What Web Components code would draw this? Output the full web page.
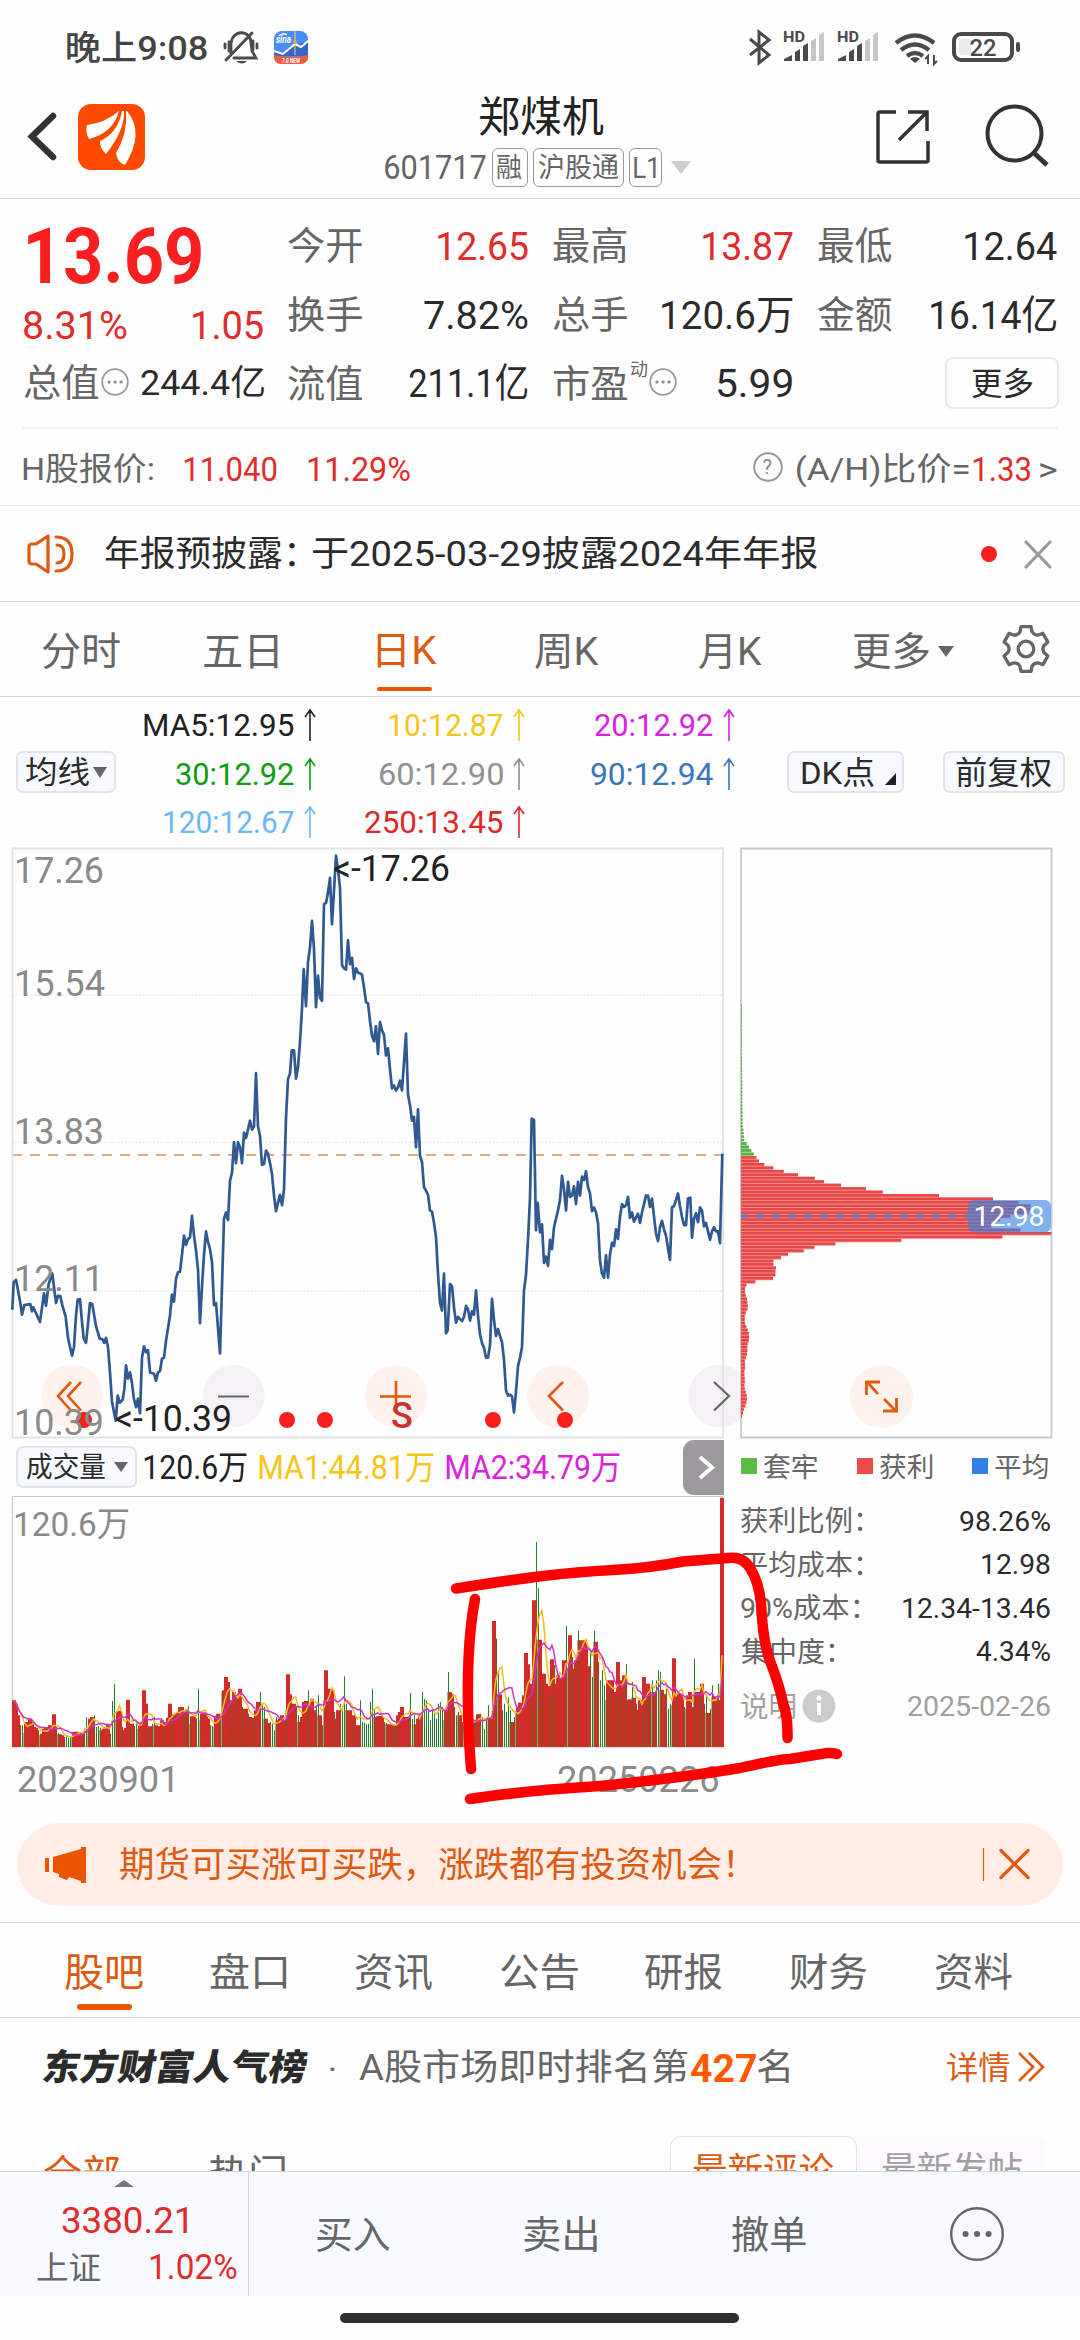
<!DOCTYPE html>
<html lang="zh-CN">
<head>
<meta charset="utf-8">
<title>郑煤机 601717</title>
<style>
html,body{margin:0;padding:0;background:#fefefe}
body{width:1080px;height:2340px;overflow:hidden;font-family:Roboto,"Noto Sans CJK SC",sans-serif;color:#2b2b2b}
</style>
</head>
<body>
<stock-app></stock-app>
<script>
const FONT = 'Roboto, "Noto Sans CJK SC", sans-serif';
const ctx = document.createElement('canvas').getContext('2d');

/* Registers an element whose shadow root holds the given markup. */
function component(name, css, html) {
  const tpl = document.createElement('template');
  tpl.innerHTML = `<style>*{box-sizing:border-box}:host{display:block;flex:none}svg{display:block;flex:none;overflow:visible}${css}</style>${typeof html === 'function' ? html() : html}`;
  customElements.define(name, class extends HTMLElement {
    constructor() {
      super();
      this.attachShadow({mode: 'open'}).appendChild(tpl.content.cloneNode(true));
    }
  });
}

/* Single-line label whose visible glyphs span exactly w pixels; g is the gap before it. */
customElements.define('fit-text', class extends HTMLElement {
  constructor() {
    super();
    this.attachShadow({mode: 'open'}).innerHTML =
      '<style>:host{display:block;flex:none;white-space:nowrap}span{display:inline-block;transform-origin:0 50%}</style><span><slot></slot></span>';
  }
  connectedCallback() {
    const a = n => this.getAttribute(n);
    const size = a('s') || 34, weight = a('b') || 400;
    ctx.font = `${weight} ${size}px ${FONT}`;
    const m = ctx.measureText(this.textContent);
    const w = +a('w'), k = w / (m.actualBoundingBoxLeft + m.actualBoundingBoxRight);
    Object.assign(this.style, {width: w + 'px', height: size * 1.2 + 'px', lineHeight: size * 1.2 + 'px',
      fontSize: size + 'px', fontWeight: weight, marginLeft: (a('g') || 0) + 'px'});
    if (a('c')) this.style.color = a('c');
    this.shadowRoot.querySelector('span').style.transform =
      `translate(${m.actualBoundingBoxLeft * k}px, 1px) scaleX(${k})`;
  }
});

const T = (text, g, w, s, c, b) => `<fit-text g="${g}" w="${w}" s="${s}"${c ? ` c="${c}"` : ''}${b ? ` b="${b}"` : ''}>${text}</fit-text>`;
const RED = '#e22b2b', GREY = '#666', INK = '#2b2b2b', ORANGE = '#dd5a10';

component('status-bar', ':host{display:flex;height:79px;padding:15px 0 0 67px;align-items:flex-start}fit-text{margin-top:12px}', () => {
  const sig = x => `<text x="${x}" y="42" font-size="15" font-weight="700" textLength="22" lengthAdjust="spacingAndGlyphs">HD</text>
   <path d="M${x+1} 61v-2l8-4v6zM${x+12} 61V52l5-3v12zM${x+20} 61V46l5-3v18z"/><path fill="#c6c6c6" d="M${x+28} 61V41l5-3v23zM${x+36} 61V35l5-3v29z"/>`;
  return T('晚上9:08', 0, 140, 34, '#444', 500) +
  `<svg width="806" height="64" viewBox="207 15 806 64" fill="#4a4a4a" font-family="Roboto">
   <g fill="none" stroke="#4a4a4a" stroke-width="2.8" stroke-linecap="round"><path d="M231 55V45C231 29 251 29 251 43l1 8 4 7H234M226 60 252 33M225 44v4M257 44v4M229 42v9M253 41v9"/></g><path d="M236 61h11q-5 5-11 0"/>
   <g><rect x="274" y="31" width="34" height="33" rx="8" fill="#4a8df8"/><path d="M274 51l8 4 14-10 12-4v15h-34z" fill="#3568c4"/><path d="M274 51l9 3 12-10 6 3 7-6" fill="none" stroke="#fff" stroke-width="2"/><path d="M295 31v24" stroke="#f2d27a"/><circle cx="295" cy="42" r="2" fill="#f29b37"/><path d="M274 55q17 4 34 0v2q0 7-8 7h-18q-8 0-8-7z" fill="#ef5a40"/><text x="282" y="62.500" font-size="7" font-weight="700" fill="#fff" textLength="18" lengthAdjust="spacingAndGlyphs">7.0 NEW</text><text x="276" y="43" font-size="10" font-weight="700" font-style="italic" fill="#fff" textLength="15" lengthAdjust="spacingAndGlyphs">sina</text><path d="M279 36q4-4 8-1" fill="none" stroke="#fff" stroke-width="1.500"/></g>
   <path d="M750 39l19 16-10 8V32l10 8-19 15" fill="none" stroke="#4a4a4a" stroke-width="3"/>
   ${sig(783)}${sig(837)}
   <g fill="none" stroke="#4a4a4a" stroke-width="4.500"><path d="M896 43q19-15 38 0M901 50q14-11 28 0M907 56q8-6 16 0"/></g><path d="M910 59q5-4 10 0l-5 4z"/><path d="M928 64v-8l-3 3M934 55v9l3-3" fill="none" stroke="#4a4a4a" stroke-width="2"/>
   <rect x="954" y="34" width="58" height="26" rx="7" fill="none" stroke="#4a4a4a" stroke-width="4"/><rect x="959" y="39" width="12" height="16" rx="3" fill="#ece8ec"/><rect x="1016" y="42" width="4" height="10" rx="2"/>
   <text x="969.500" y="56" font-size="24" font-weight="500" textLength="27" lengthAdjust="spacingAndGlyphs">22</text></svg>`;
});

component('app-header', `:host{display:flex;height:120px;border-bottom:1px solid #d5d5e0}
 .mid{flex:none;width:308px;margin-left:240px;padding-top:13px}.sub{display:flex;align-items:center;height:40px;margin-top:5px}
 .tag{border:1.500px solid #999;border-radius:6px;height:39px;display:flex;align-items:center;flex:none}
 .tri{flex:none;border:10px solid transparent;border-top:13px solid #ccc;border-bottom:0;margin:0 0 0 9px}`,
 `<svg width="145" height="118" viewBox="0 79 145 118"><path d="M53 116 32 136.500 53 157" fill="none" stroke="#333" stroke-width="6.500" stroke-linecap="round"/>
  <rect x="78" y="104" width="67" height="66" rx="13" fill="#ff4a00"/>
  <g fill="#fff"><path d="M87 125q18-2 32-14-6 22-30 28-4-7-2-14z"/><path d="M100 141q18-8 22-30l2 0q1 19-18 43-6-5-6-13z"/><path d="M116 153q12-20 10-42l1 0q18 22-2 54-8-3-9-12z"/></g></svg>
  <div class="mid">${T('郑煤机', 93.500, 125, 42, '#222')}<div class="sub">${T('601717', 0, 101, 33.500, GREY)}
  <div class="tag" style="margin-left:6px;width:36px">${T('融',4,25,27,GREY)}</div><div class="tag" style="margin-left:5px;width:91px">${T('沪股通',5,80,27,GREY)}</div><div class="tag" style="margin-left:5px;width:33px">${T('L1',4,22,29,GREY)}</div><i class="tri"></i></div></div>
  <svg width="387" height="118" viewBox="693 79 387 118" fill="none" stroke="#333"><path stroke-width="3.500" d="M896 112h-16q-2 0-2 2v46q0 2 2 2h46q2 0 2-2v-19M908 112h19v19M927 112l-28 28"/><circle cx="1014.500" cy="133.500" r="27" stroke-width="4"/><path stroke-width="5" d="M1034 153l13 12"/></svg>`);

const dots = '<svg width="28" height="28" viewBox="0 0 28 28"><circle cx="14" cy="13" r="12.800" fill="none" stroke="#999" stroke-width="1.800"/><path d="M8 13h.1M14 13h.1M20 13h.1" stroke="#888" stroke-width="3.200" stroke-linecap="round"/></svg>';
const cell = (l, v, w, c, s = 39.500) => `<div class="cell">${T(l, 0, 74, 37.500, GREY)}${T(v, 0, w, s, c)}</div>`;
component('quote-panel', `:host{display:flex;height:230px;margin:0 22px;border-bottom:2px solid #f2f2f5}
 .l{width:242px;padding:10px 0 0 2px}.row{display:flex;align-items:center;height:69px}
 .grid{display:grid;grid-template-columns:240px 240px 239px;column-gap:25px;grid-template-rows:69px 69px 68px;margin-left:24px;padding-top:12px}
 .cell{display:flex;align-items:center;justify-content:space-between}.pe{justify-content:flex-start}.sup{align-self:flex-start;margin-top:9px}
 .btn{justify-self:end;align-self:center;width:114px;height:52px;border:2px solid #eae8ef;border-radius:8px;display:flex;align-items:center;margin-right:-2px}`,
 `<div class="l"><div class="row" style="height:94px">${T('13.69', 4, 173, 78, '#fa2020', 700)}</div>
  <div class="row" style="height:44px">${T('8.31%',0,103,39.500,RED)}${T('1.05',66,70,39.500,RED)}</div>
  <div class="row" style="height:71px">${T('总值',0,74,37.500,GREY)}<span style="margin-left:3px">${dots}</span>${T('244.4亿',12,123,35,INK)}</div></div>
 <div class="grid">${cell('今开','12.65',90,RED)}${cell('最高','13.87',90,RED)}${cell('最低','12.64',92,INK)}
 ${cell('换手','7.82%',104,INK)}${cell('总手','120.6万',131,INK)}${cell('金额','16.14亿',126,INK)}
 ${cell('流值','211.1亿',119,INK)}<div class="cell pe">${T('市盈',0,74,37.500,GREY)}<span class="sup">${T('动',3,17,18,GREY)}</span><span style="margin-left:2px">${dots}</span>${T('5.99',40,75,39.500,INK)}</div>
 <div class="btn">${T('更多',25,61,32,INK)}</div></div>`);

component('h-share', ':host{display:flex;height:77px;align-items:center;padding:2px 0 0 23px;border-bottom:1px solid #ececf0}',
 T('H股报价:',0,130,32,GREY)+T('11.040',31,93,34,RED)+T('11.29%',31,102,34,RED)+
 `<svg width="30" height="30" style="margin-left:343px" viewBox="0 0 30 30"><circle cx="15" cy="14" r="13.800" fill="none" stroke="#999" stroke-width="2"/><text x="9.500" y="21" font-family="Roboto" font-size="20" fill="#888">?</text></svg>`+
 T('(A/H)比价=',14,172,32,GREY)+T('1.33',4,57,34,RED)+T('&gt;',10,17,34,GREY));

component('notice-bar', ':host{display:flex;height:96px;align-items:center;border-bottom:1px solid #d5d5e0;padding-left:27px}',
 `<svg width="48" height="42" viewBox="27 532 48 42" fill="none" stroke="#dd5a10" stroke-width="3.200" stroke-linecap="round" stroke-linejoin="round"><path d="M48 535v36l-12-8h-4q-3 0-3-3v-14q0-3 3-3h4zM56 536q16 0 16 17t-16 17M57 544q7 0 7 9t-7 9"/></svg>`+
 T('年报预披露：',30,190,35.5,INK)+T('于2025-03-29披露2024年年报',17,506,35.5,INK)+
 `<svg width="100" height="40" viewBox="965 533 100 40" style="margin-left:147px"><circle cx="989" cy="553" r="8" fill="#fa2020"/><path d="M1026 541l24 25M1050 541l-24 25" stroke="#999" stroke-width="3.200" stroke-linecap="round"/></svg>`);

component('period-tabs', ':host{display:flex;height:95px;align-items:center;border-bottom:1px solid #d5d5e0;padding-top:4px}.on{display:flex;flex-direction:column;height:80px;padding-top:16px}.on i{height:6px;width:55px;border-radius:3px;background:#eb5500;margin-top:13px}.tri{border:8px solid transparent;border-top:11px solid #666;border-bottom:0;margin-left:9px}',
 T('分时',42,78,39,GREY)+T('五日',84,74,39,GREY)+`<div class="on" style="margin-left:99px">${T('日K',0,60,39,ORANGE)}<i></i></div>`+
 T('周K',98,64,39,GREY)+T('月K',100,63,39,GREY)+T('更多',91,76,39,GREY)+'<i class="tri"></i>'+
 (() => {let d='';for(let k=0;k<6;k++){const p=(r,a)=>`${(26+r*Math.sin(a)).toFixed(1)} ${(26-r*Math.cos(a)).toFixed(1)}`,b=k*Math.PI/3;d+=`${k?'L':'M'}${p(23,b-.22)}L${p(23,b+.22)}L${p(18.2,b+.34)}Q${p(16,b+.52)} ${p(18.2,b+.71)}`;}
 return `<svg width="52" height="52" viewBox="0 0 52 52" style="margin:-4px 0 0 46px" fill="none" stroke="#666" stroke-width="3.300"><path d="${d}Z" stroke-linejoin="round"/><circle cx="26" cy="26" r="7.800"/></svg>`})());

const arrow = '<svg width="12" height="32" viewBox="0 0 12 32" style="margin-left:10px" fill="none" stroke="currentColor" stroke-width="1.600"><path d="M6 32V1M1 8 6 1l5 7"/></svg>';
const ma = (t, w, c) => `<div class="m" style="color:${c}">${T(t,0,w,31)}${arrow}</div>`;
component('ma-legend', `:host{display:flex;height:151px}
 .g{display:grid;grid-template-columns:200px 209px 210px;grid-template-rows:48px 49px 48px;padding-top:4px}.m{display:flex;align-items:center;justify-content:flex-end}
 .b{display:flex;align-items:center;height:42px;margin-top:54px;border:2px solid #e2e3ec;border-radius:7px;background:#f6faff;flex:none}.tri{border:7px solid transparent;border-top:11px solid #666;border-bottom:0;margin-left:4px}`,
 `<div class="b" style="width:100px;margin-left:16px">${T('均线',8,63,31,INK)}<i class="tri"></i></div>
 <div class="g">${ma('MA5:12.95',150,'#222')}${ma('10:12.87',114,'#f5c518')}${ma('20:12.92',118,'#dc23dc')}
 ${ma('30:12.92',118,'#109c10')}${ma('60:12.90',123,'#919191')}${ma('90:12.94',122,'#3a76ba')}${ma('120:12.67',130,'#6cb8f5')}${ma('250:13.45',138,'#e02828')}</div>
 <div class="b" style="width:117px;margin-left:52px">${T('DK点',13,72,32,INK)}<svg width="11" height="12" style="margin:14px 0 0 11px"><path d="M11 0V12H0z" fill="#222"/></svg></div>
 <div class="b" style="width:122px;margin-left:39px">${T('前复权',11,95,32,INK)}</div>`);

/* Closing prices: x in thirds of a pixel, y on the plotting grid of 2.376 units per pixel. */
const closeA = '37,1116 41,1050 48,1045 54,1070 60,1095 66,1128 73,1105 91,1103 96,1120 100,1110 120,1145 132,1077 138,1107 146,1055 157,1030 168,1100 174,1083 181,1084 187,1105 197,1133 204,1183 216,1225 222,1205 228,1130 233,1092 240,1091 246,1145 251,1185 258,1195 264,1150 270,1100 277,1103 288,1155 299,1185 307,1186 313,1195 318,1183 324,1205 330,1265 336,1335 347,1380 353,1320 359,1337 368,1330 373,1305 378,1248 384,1280 390,1265 396,1290 401,1325 408,1348 414,1327 420,1362 426,1230 432,1203 438,1217 444,1212 450,1265 462,1268 468,1285 474,1265 480,1262 486,1232 492,1230 498,1190 504,1160 510,1130 516,1080 522,1097 528,1042 534,1027 540,1026 546,985 552,940 558,962 564,948 570,945 576,893 582,940 588,975 594,1020 600,1148 606,1060 612,985 618,930 624,955 630,972 636,1003 642,1105 648,1100 654,1160 660,1220 666,1060 672,900 678,885 684,903 690,810 696,790 702,718 708,768 714,718 720,730 726,768 732,695 738,708 744,688 750,667 756,688 762,680 768,554 774,680 780,703 786,772 792,770 798,738 804,745 810,768 816,793 822,845 828,882 834,862 840,843 846,868 852,830 858,660 864,568 870,555 875,500 882,500 888,567 894,540 900,480 906,400 911,307 918,395 924,290 930,255 936,192 942,260 948,397 954,322 960,375 966,382 972,152 978,150 984,125 990,90 996,200 1002,120 1008,37 1014,70 1020,115 1026,297 1032,305 1038,308 1044,238 1050,295 1056,280 1062,330 1068,305 1074,315 1080,317';
const closeB = '6,320 12,350 18,385 24,388 30,430 36,465 42,478 48,442 54,508 60,433 66,452 72,463 78,512 84,495 90,545 96,590 102,583 108,595 114,588 120,572 126,595 138,460 144,605 150,630 156,667 162,658 168,730 174,640 180,750 186,765 192,825 198,833 204,843 210,880 216,883 222,910 228,943 234,1030 240,1100 246,1118 252,1030 258,1172 263,1165 270,1055 276,1060 282,1110 288,1147 294,1133 306,1143 312,1133 318,1107 324,1115 330,1142 336,1120 342,1128 348,1070 354,1130 360,1175 366,1195 372,1207 378,1230 384,1230 390,1200 396,1090 402,1140 408,1178 414,1162 420,1178 426,1193 432,1235 438,1308 444,1320 450,1318 456,1322 462,1360 468,1310 474,1250 480,1230 486,1205 492,1070 498,1033 504,950 510,850 515,662 522,665 528,927 533,862 540,932 546,913 552,1005 558,990 564,1012 570,950 576,972 582,920 588,900 594,880 600,855 606,798 612,830 618,880 624,812 630,848 636,845 642,823 648,865 654,812 660,845 666,800 672,808 678,787 684,825 690,840 696,882 702,873 708,885 714,910 720,1000 726,1030 732,1040 738,987 744,1040 750,985 756,957 762,965 768,925 774,948 780,895 786,865 792,872 798,868 804,848 810,898 816,885 822,907 828,897 834,888 840,910 846,885 852,865 858,845 864,845 870,872 876,852 882,895 888,935 894,953 900,920 906,905 912,925 918,940 924,970 930,998 936,872 942,870 948,855 954,840 960,870 966,895 972,915 978,915 984,852 991,850 996,945 1002,900 1008,887 1014,908 1020,873 1026,880 1032,918 1038,910 1044,930 1050,950 1056,930 1062,920 1068,930 1074,930 1080,958 1087,745';
const toPts = (s, off) => s.split(' ').map(p => {const [x,y]=p.split(',');return `${((+x+off)/3).toFixed(1)},${(840+y/2.376).toFixed(1)}`}).join(' ');

const label = (t, x, y, w, c='#8a8a8a', s=36) => `<text x="${x}" y="${y}" font-size="${s}" fill="${c}" textLength="${w}" lengthAdjust="spacingAndGlyphs">${t}</text>`;
component('price-chart', ':host{width:712px;height:590px}text{font-family:Roboto,"Noto Sans CJK SC",sans-serif}', () => `<svg width="712" height="590" viewBox="12 848 712 590">
 <path d="M13 995H722M13 1142.500H722M13 1291H722" stroke="#ececec" stroke-width="1.500" stroke-dasharray="2 1.500"/>
 <path d="M12 1155H723" stroke="#eda67c" stroke-width="2" stroke-dasharray="10 8"/>
 <g><circle cx="72" cy="1396" r="31" fill="#fff1ec"/><circle cx="233.500" cy="1396" r="31" fill="#f5f2f6"/><circle cx="396" cy="1396" r="31" fill="#fff1ec"/><circle cx="558" cy="1396" r="31" fill="#fff1ec"/><circle cx="719.500" cy="1396" r="31" fill="#f5f2f6"/></g>
 <path d="M12.500 848.500H723V1437.500H12.500Z" fill="none" stroke="#e2e2e2" stroke-width="1.800"/>
 <g fill="none" stroke="#e25a10" stroke-width="2.600"><path d="M71 1382 58 1396l13 14.500M81 1382l-13 14 13 14.500M380 1396.500h31M396 1381v31M563 1382l-14 14 14 14.500"/><path stroke="#666" stroke-width="2.200" d="M218 1396.500h31M714 1382l15 14-15 14.500"/></g>
 <polyline points="${toPts(closeA,0)} ${toPts(closeB,1080)}" fill="none" stroke="#2f5991" stroke-width="2.700" stroke-linejoin="round"/>
 <g fill="#f91f1f"><circle cx="84" cy="1420" r="8"/><circle cx="287" cy="1420" r="8"/><circle cx="325" cy="1420" r="8"/><circle cx="493" cy="1420" r="8"/><circle cx="565" cy="1420" r="8"/></g>
 ${label('17.26',14,883,90)}${label('15.54',14,996,91)}${label('13.83',14,1144,90)}${label('12.11',14,1291,90)}${label('10.39',14,1435,90)}
 ${label('&lt;-17.26',333,881,117,'#222')}${label('&lt;-10.39',115,1430.500,117,'#222')}
 <text x="391" y="1428" font-size="36" font-weight="500" fill="#c83232">S</text></svg>`);

const chips = [79,86,93,100,108,116,132,159,190,233,283,311,362,437,487,656,818,895,930,930,925,870,840,813,813,900,993,846,543,345,282,250,203,182,159,159,167,165,165,158,105,78,74,74,76,80,81,82,81,76,73,73,74,78,82,85,86,85,82,81,81,80,76,73,74,74,72,72,73,73,72,73,76,79,80,78,75,70,68,65];
component('chip-chart', ':host{width:312px;height:590px}text{font-family:Roboto,sans-serif}', () => {
  let bars = '';
  for (let i = 1; i < 41; i++) bars += `<rect x="741" y="${(1142.3-i*3.45).toFixed(2)}" width="${Math.max(.9,3.6-Math.min(i,6)*.3-i*.035).toFixed(1)}" height="2.500" fill="#57ae45"/>`;
  chips.forEach((v, i) => {const y=(1142.3+i*3.45).toFixed(2),w=((v-62)/3).toFixed(1),g=i<4;
    bars += `<rect x="741" y="${y}" width="${w}" height="3.450" fill="${g?'#a4dd98':'#fa8d8d'}"/><rect x="741" y="${y}" width="${w}" height="2.600" fill="${g?'#57ae45':'#e74747'}"/>`;});
  return `<svg width="312" height="590" viewBox="741 848 312 590"><path d="M741 848.500H1051.500V1437.500H741Z" fill="none" stroke="#c9c9c9" stroke-width="1.800"/>${bars}
  <path d="M741 1216H968" stroke="#4a7cd0" stroke-width="3" stroke-dasharray="8 8" stroke-dashoffset="1"/>
  <rect x="968" y="1200" width="83" height="32.500" rx="6" fill="#3282e6" fill-opacity=".62"/>${label('12.98',973.500,1226,71,'#fff',28.5)}
  <circle cx="881.500" cy="1396.500" r="31.500" fill="#fff1ec"/><path d="M878 1394l-10-11M866.500 1395v-13H880M884 1399l11 11M896.500 1398v13H883" fill="none" stroke="#e25a10" stroke-width="2.800"/></svg>`;
});

component('chip-legend', ':host{display:flex;height:56px;align-items:center}i{width:16px;height:16px;flex:none}',
 ['套牢,#5cba46,0','获利,#eb4b4b,40','平均,#3280e6,39'].map(s=>{const [t,c,g]=s.split(',');return `<i style="background:${c};margin-left:${g}px"></i>${T(t,7,53,27.5,GREY)}`}).join(''));

component('volume-head', `:host{display:flex;height:58px;align-items:center}.b{display:flex;align-items:center;width:121px;height:42px;margin-left:4px;border:2px solid #e2e3ec;border-radius:7px;background:#f6faff;flex:none}
 .tri{border:7px solid transparent;border-top:10px solid #666;border-bottom:0;margin-left:9px}.n{width:41px;height:55px;background:#9c9a9c;border-radius:11px 0 0 11px;margin-left:63px;flex:none}`,
 `<div class="b">${T('成交量',9,78,28,INK)}<i class="tri"></i></div>${T('120.6万',7,103,33.5,'#222')}${T('MA1:44.81万',12,175,33.5,'#f5c518')}${T('MA2:34.79万',12,174,33.5,'#dc23dc')}
 <div class="n"><svg width="41" height="55"><path d="M17 17l12 10.500-12 10.500" fill="none" stroke="#fff" stroke-width="4"/></svg></div>`);

/* One token per trading day: r/g for rise or fall, then the bar height in thirds of a pixel. */
const vols = ('r140 r130 r95 g65 g65 g42 r75 r60 r85 r75 r60 r58 g50 g35 r40 r55 r60 g45 r65 r55 r98 g60 g42 r38 r35 g30 g30 g28 g30 g32 r45 r46 r44 r44 r40 g55 g90 g60 r85 r90 g95 g60 g62 g58 r50 r55 r60 r68 g40 g138 g188 g80 r105 r108 g60 r50 r58 r142 g65 r70 g62 g75 g55 r65 r75 r170 r130 g55 r62 g70 g90 r65 r62 r60 r80 g55 r75 r88 r130 g95 r98 r95 r105 r120 r120 g100 r105 g122 g70 r92 r92 g85 g175 g80 r100 r103 r95 r85 g65 g62 g60 r90 r100 g100 g165 r170 r210 r195 g130 r140 r165 g150 r150 r175 g120 r115 r115 g100 r90 r88 g85 r110 r135 g165 g130 g120 r85 r72 g75 g70 g50 g90 r80 r85 r95 r80 g110 r218 r158 r125 r130 g120 g95 r75 r90 r135 r138 g170 r125 r145 r110 g120 g155 r95 g65 g140 r230 r170 r175 r172 g105 r85 r110 g130 g115 g212 g130 r110 r110 g85 r95 r65 r65 g140 g75 g72 g68 g70 g135 g175 g110 r90 r92 r93 r92 g75 g72 r68 r68 g60 r65 g65 r95 r105 ' +
 'r120 r90 r90 r88 g162 g85 g95 r68 r85 r95 g165 g145 g140 g110 g80 g120 g100 g85 g130 g135 g120 g80 r110 g225 r165 r158 g120 g95 g105 r95 g75 g60 r70 g80 r80 r70 g75 r80 r98 g100 g90 g55 g80 g125 r85 r90 r378 g325 g230 r158 g110 g130 g105 g150 g110 r75 g90 g105 r120 r133 r133 r155 r282 r248 r190 g135 r440 g615 g478 r322 g190 r220 r190 r183 g150 r263 g245 r190 r215 r205 r205 r260 g363 g230 r335 g270 r235 r260 g348 r320 r318 r320 r310 r242 g290 g210 g348 r316 g255 g200 g230 g185 g140 r200 g170 r200 r165 g150 r255 g160 r200 r215 g248 r142 r143 g195 r148 g130 r112 r140 g110 r210 g160 r190 g170 g200 r165 g200 g230 g225 r172 r158 g175 g115 g130 g125 r266 g130 r160 r160 r152 g120 g115 r155 r165 r120 g265 r165 r165 g150 r190 g130 g155 r102 g115 g185 r150 r148 g190 r140 r748').split(' ').map(t => [t[0], +t.slice(1)/3]);
component('volume-chart', ':host{width:712px;height:252px}text{font-family:Roboto,"Noto Sans CJK SC",sans-serif}', () => {
  const step = 708.5/(vols.length-1), X = i => 13.5 + i*step;
  let r = '', g = '', mix = '';
  vols.forEach(([c,h],i) => {
    const x = Math.round(X(i));
    if (c === 'r') { r += `M${x-2} 1747V${(1747-h).toFixed(1)}h4V1747z`; return; }
    g += `M${x} 1747V${(1747-h).toFixed(1)}h1V1747z`;
    const near = Math.max(...[vols[i-1], vols[i+1]].map(v => v && v[0] === 'r' ? v[1] : 0));
    if (near) mix += `M${x-.5} 1747V${(1747-Math.min(h,near)).toFixed(1)}h1.600V1747z`;
  });
  const avg = n => vols.map((_,i) => {const s=vols.slice(Math.max(0,i-n+1),i+1);return `${X(i).toFixed(1)},${(1747-s.reduce((a,b)=>a+b[1],0)/s.length).toFixed(1)}`}).join(' ');
  return `<svg width="712" height="252" viewBox="12 1496 712 252"><path d="M12.500 1496.500H723V1747H12.500Z" fill="none" stroke="#c9c9c9" stroke-width="1.200"/>
  <path d="${r}" fill="#d22c2a"/><path d="${g}" fill="#23802a"/><path d="${mix}" fill="#8a4f20"/>
  <polyline points="${avg(5)}" fill="none" stroke="#f5bc22" stroke-width="1.500"/><polyline points="${avg(10)}" fill="none" stroke="#cc32cc" stroke-width="1.500"/>
  ${label('120.6万',13,1536,117,'#8a8a8a',34)}</svg>`;
});
component('date-axis', ':host{display:flex;height:62px;align-items:flex-start;padding:9px 0 0 6px}', T('20230901',0,154,36.5,'#8a8a8a')+T('20250226',386,160,36.5,'#8a8a8a'));

const stat = (l,w,v,vw) => `<div class="r">${T(l,0,w,28,GREY)}${T(v,0,vw,28.5,INK)}</div>`;
component('chip-stats', ':host{width:309px;padding-top:5px}.r{display:flex;justify-content:space-between;align-items:center;height:43.600px}.r.x{height:66px}.k{display:flex;align-items:center}',
 stat('获利比例：',122,'98.26%',90)+stat('平均成本：',122,'12.98',68)+stat('90%成本：',119,'12.34-13.46',147)+stat('集中度：',94,'4.34%',74)+
 `<div class="r x"><div class="k">${T('说明',0,54,28,'#a3a3a3')}<svg width="34" height="34" style="margin-left:7px" fill="#fff"><circle cx="17" cy="17" r="16.500" fill="#ccc"/><circle cx="17" cy="9" r="2.500"/><path d="M15 14h4v12h-4z"/></svg></div>${T('2025-02-26',0,142,28.5,'#a0a0a0')}</div>`);

component('market-charts', `:host{display:flex;height:962px;padding-left:12px;position:relative}.left{width:712px}.right{margin-left:17px}
 .ink{position:absolute;left:0;top:0;pointer-events:none}`,
 `<div class="left"><price-chart></price-chart><volume-head></volume-head><volume-chart></volume-chart><date-axis></date-axis></div>
  <div class="right"><chip-chart></chip-chart><chip-legend></chip-legend><chip-stats></chip-stats></div>
  <svg class="ink" width="1080" height="962" viewBox="0 848 1080 962" fill="none" stroke="#f00" stroke-width="10.500" stroke-linecap="round" stroke-linejoin="round">
  <path d="M456 1588.500Q510 1580 543 1576T613 1570T683 1561.500L728 1558Q743 1556 750 1568Q759 1582 761 1604Q763 1642 770 1661Q779 1684 783 1703Q788 1716 787.500 1738"/>
  <path d="M475 1599Q465 1650 469 1740L471 1769"/><path d="M470 1799Q520 1791 600 1786Q680 1778 740 1768Q780 1759 790 1759L821 1754Q830 1752 837 1754"/></svg>`);

component('promo-banner', ':host{display:flex;align-items:center;width:1046px;height:83px;margin:13px 0 16px 17px;border-radius:42px;background:#ffede6}',
 `<svg width="42" height="38" viewBox="45 1846 42 38" style="margin-left:28px" fill="#eb5500"><path d="M45 1858h4v14h-4zM53 1857l28-8v-2h5v36h-5v-2l-12-4-2 3-8-3v-3l-6-2z"/></svg>`+
 T('期货可买涨可买跌，涨跌都有投资机会！',33,614,35.5,ORANGE)+
 `<svg width="50" height="40" viewBox="980 1845 50 40" style="margin-left:247px" stroke="#e05a10"><path d="M982.500 1848v33" stroke-width="1.200"/><path d="M1000 1850.500l27 27M1027 1850.500l-27 27" stroke-width="3.200" stroke-linecap="round"/></svg>`);

component('info-tabs', ':host{display:flex;height:96px;border-top:1px solid #d5d5e0;border-bottom:1px solid #d5d5e0;padding:26px 0 0 65px}.t i{display:block;height:6px;width:55px;border-radius:3px;background:#eb5500;margin:8px 0 0 12px}.t{width:145.500px}',
 [['股吧',78],['盘口',77],['资讯',77],['公告',78],['研报',77],['财务',77],['资料',77]].map(([t,w],i)=>`<div class="t">${T(t,0,w,39,i?GREY:ORANGE)}${i?'':'<i></i>'}</div>`).join(''));

component('rank-row', ':host{display:flex;height:100px;align-items:center;padding-left:44px}.s{transform:skewX(-10deg)}',
 `<div class="s">${T('东方财富人气榜',0,262,36,'#2b2b2b',900)}</div>`+T('·',24,5,34,GREY)+T('A股市场即时排名第',24,329,36,GREY)+T('427',3,65,39,'#ff5a00',700)+T('名',1,32,36,GREY)+T('详情',158,63,31.5,ORANGE)+
 `<svg width="28" height="30" style="margin:-3px 0 0 7px" fill="none" stroke="#dd5a10" stroke-width="2.600"><path d="M2 1l14 14L2 29M12 1l14 14-14 14"/></svg>`);

component('feed-filter', ':host{display:flex;height:53px;overflow:hidden;align-items:flex-start}.t{margin-top:33px}.seg{display:flex;height:80px;margin-top:18px;flex:none}.a{width:187px;border:1.500px solid #e9e0e8;border-radius:11px 11px 0 0}.b{width:188px;background:#fdf9fe;border-radius:0 11px 0 0}.a,.b{padding-top:13px}',
 `<div class="t">${T('全部',43,77,38,ORANGE)}</div><div class="t">${T('热门',89,76,38,GREY)}</div><div class="seg" style="margin-left:385px"><div class="a">${T('最新评论',22,141,35,ORANGE)}</div><div class="b">${T('最新发帖',25,140,35,'#a0a0a0')}</div></div>`);

component('trade-bar', ':host{display:flex;height:125px;background:#f7faff;border-top:1px solid #d5d5e0;align-items:center}.i{width:249px;height:124px;border-right:1px solid #d5d5e0;flex:none}.tri{display:block;width:0;border:10px solid transparent;border-bottom:7px solid #777;border-top:0;margin:8px 0 0 114px}.r{display:flex;align-items:center}',
 `<div class="i"><i class="tri"></i><div class="r" style="height:46px;margin-top:11px">${T('3380.21',62,125,36,RED)}</div><div class="r" style="height:46px;margin-top:0">${T('上证',37,63,32,GREY)}${T('1.02%',50,87,35,RED)}</div></div>`+
 T('买入',67,74,37.5,GREY)+T('卖出',134,73,37.5,GREY)+T('撤单',135,74,37.5,GREY)+
 `<svg width="56" height="56" style="margin-left:143px"><circle cx="28" cy="28" r="25.800" fill="none" stroke="#666" stroke-width="2.400"/><path d="M16.500 28h.1M28 28h.1M39.500 28h.1" stroke="#666" stroke-width="6" stroke-linecap="round"/></svg>`);

component('home-indicator', ':host{height:44px;padding:17px 0 0 340px}i{display:block;width:399px;height:10px;border-radius:5px;background:#2e2e2e}', '<i></i>');

component('stock-app', ':host{width:1080px;height:2340px;overflow:hidden}',
 ['status-bar','app-header','quote-panel','h-share','notice-bar','period-tabs','ma-legend','market-charts','promo-banner','info-tabs','rank-row','feed-filter','trade-bar','home-indicator'].map(n=>`<${n}></${n}>`).join(''));
</script>
</body>
</html>
